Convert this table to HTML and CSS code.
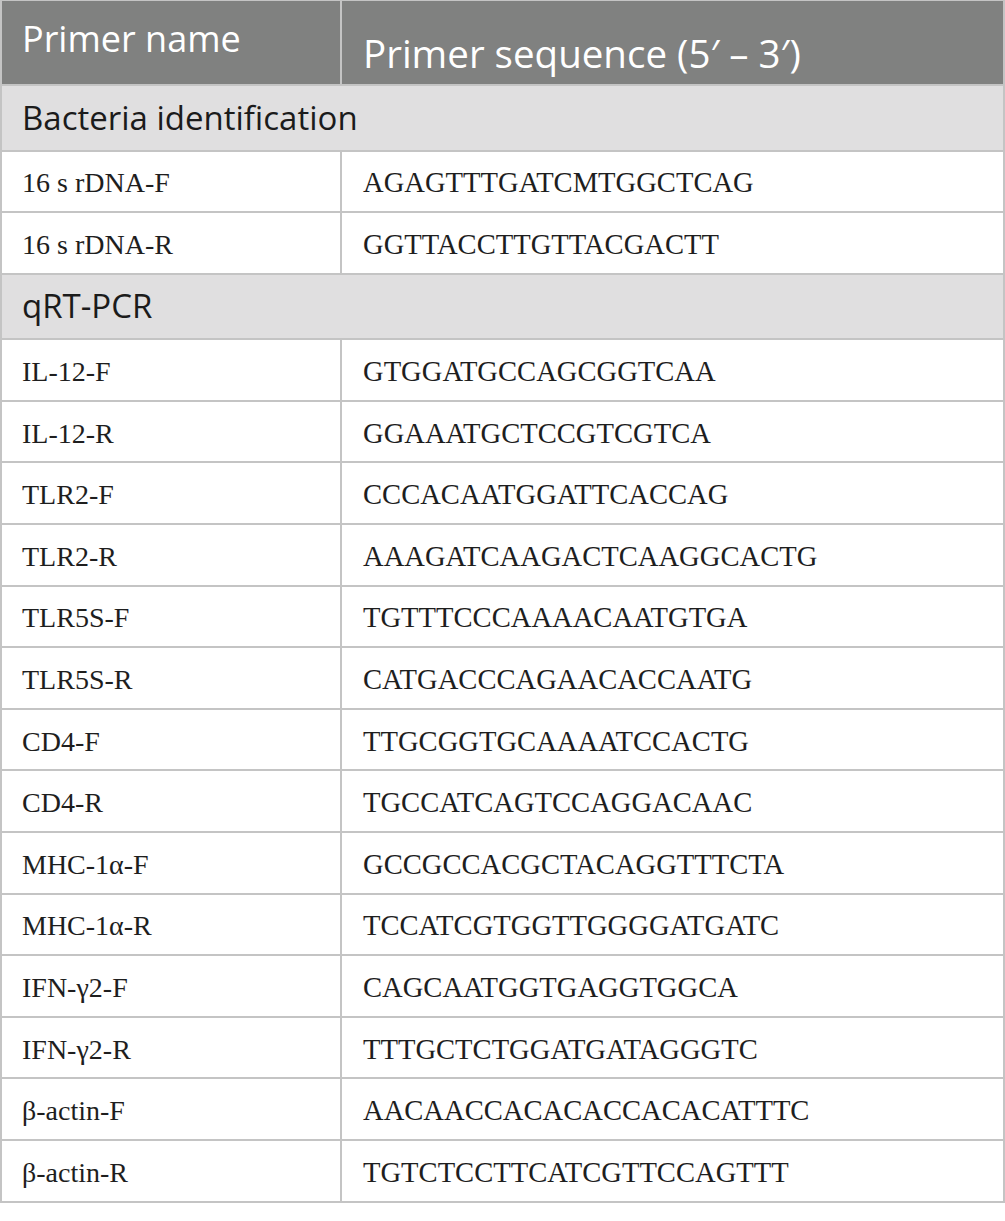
FILE: index.html
```html
<!DOCTYPE html>
<html lang="en">
<head>
<meta charset="utf-8">
<title>Primers</title>
<link rel="stylesheet" href="styles.css">
</head>
<body>
<table class="primers">
  <thead>
    <tr class="head-row">
      <th class="name-head">Primer name</th>
      <th class="seq-head">Primer sequence (5′ – 3′)</th>
    </tr>
  </thead>
  <tbody>
    <tr class="section-row"><td colspan="2">Bacteria identification</td></tr>
    <tr class="data-row"><td class="name">16 s rDNA-F</td><td class="seq">AGAGTTTGATCMTGGCTCAG</td></tr>
    <tr class="data-row"><td class="name">16 s rDNA-R</td><td class="seq">GGTTACCTTGTTACGACTT</td></tr>
    <tr class="section-row"><td colspan="2">qRT-PCR</td></tr>
    <tr class="data-row"><td class="name">IL-12-F</td><td class="seq">GTGGATGCCAGCGGTCAA</td></tr>
    <tr class="data-row"><td class="name">IL-12-R</td><td class="seq">GGAAATGCTCCGTCGTCA</td></tr>
    <tr class="data-row"><td class="name">TLR2-F</td><td class="seq">CCCACAATGGATTCACCAG</td></tr>
    <tr class="data-row"><td class="name">TLR2-R</td><td class="seq">AAAGATCAAGACTCAAGGCACTG</td></tr>
    <tr class="data-row"><td class="name">TLR5S-F</td><td class="seq">TGTTTCCCAAAACAATGTGA</td></tr>
    <tr class="data-row"><td class="name">TLR5S-R</td><td class="seq">CATGACCCAGAACACCAATG</td></tr>
    <tr class="data-row"><td class="name">CD4-F</td><td class="seq">TTGCGGTGCAAAATCCACTG</td></tr>
    <tr class="data-row"><td class="name">CD4-R</td><td class="seq">TGCCATCAGTCCAGGACAAC</td></tr>
    <tr class="data-row"><td class="name">MHC-1α-F</td><td class="seq">GCCGCCACGCTACAGGTTTCTA</td></tr>
    <tr class="data-row"><td class="name">MHC-1α-R</td><td class="seq">TCCATCGTGGTTGGGGATGATC</td></tr>
    <tr class="data-row"><td class="name">IFN-γ2-F</td><td class="seq">CAGCAATGGTGAGGTGGCA</td></tr>
    <tr class="data-row"><td class="name">IFN-γ2-R</td><td class="seq">TTTGCTCTGGATGATAGGGTC</td></tr>
    <tr class="data-row"><td class="name">β-actin-F</td><td class="seq">AACAACCACACACCACACATTTC</td></tr>
    <tr class="data-row"><td class="name">β-actin-R</td><td class="seq">TGTCTCCTTCATCGTTCCAGTTT</td></tr>
  </tbody>
</table>
</body>
</html>
```
FILE: styles.css
```css
html, body {
  margin: 0;
  padding: 0;
  background: #ffffff;
}

.primers {
  border-collapse: separate;
  border-spacing: 0;
  width: 1005px;
  table-layout: fixed;
  border-top: 1px solid #c4c4c4;
  border-left: 2px solid #c4c4c4;
}

.primers th,
.primers td {
  box-sizing: border-box;
  border-right: 2px solid #c4c4c4;
  border-bottom: 2px solid #c4c4c4;
  padding: 0 0 0 20px;
  text-align: left;
}

.primers .name-head {
  width: 340px;
}

.head-row {
  height: 85px;
}

.primers .head-row th {
  background: #808180;
  color: #ffffff;
  font-family: "Open Sans", "Liberation Sans", sans-serif;
  font-weight: 400;
  font-size: 36px;
  line-height: 40px;
  vertical-align: top;
}

.primers .head-row .name-head {
  padding-top: 18px;
}

.primers .head-row .seq-head {
  padding-top: 32px;
  padding-left: 21px;
  font-size: 38.5px;
}

.section-row {
  height: 65.5px;
}

.primers .section-row td {
  background: #e0dfe0;
  color: #1b1b1b;
  font-family: "Open Sans", "Liberation Sans", sans-serif;
  font-size: 33px;
  line-height: 40px;
  vertical-align: middle;
}

.data-row {
  height: 61.6px;
}

.primers .data-row td {
  background: #ffffff;
  color: #1e1e1e;
  font-family: "Liberation Serif", "Times New Roman", serif;
  font-size: 28px;
  line-height: 32px;
  vertical-align: middle;
  padding-top: 4px;
}

.primers .data-row td.seq {
  padding-left: 21px;
  font-size: 28.6px;
}
```
